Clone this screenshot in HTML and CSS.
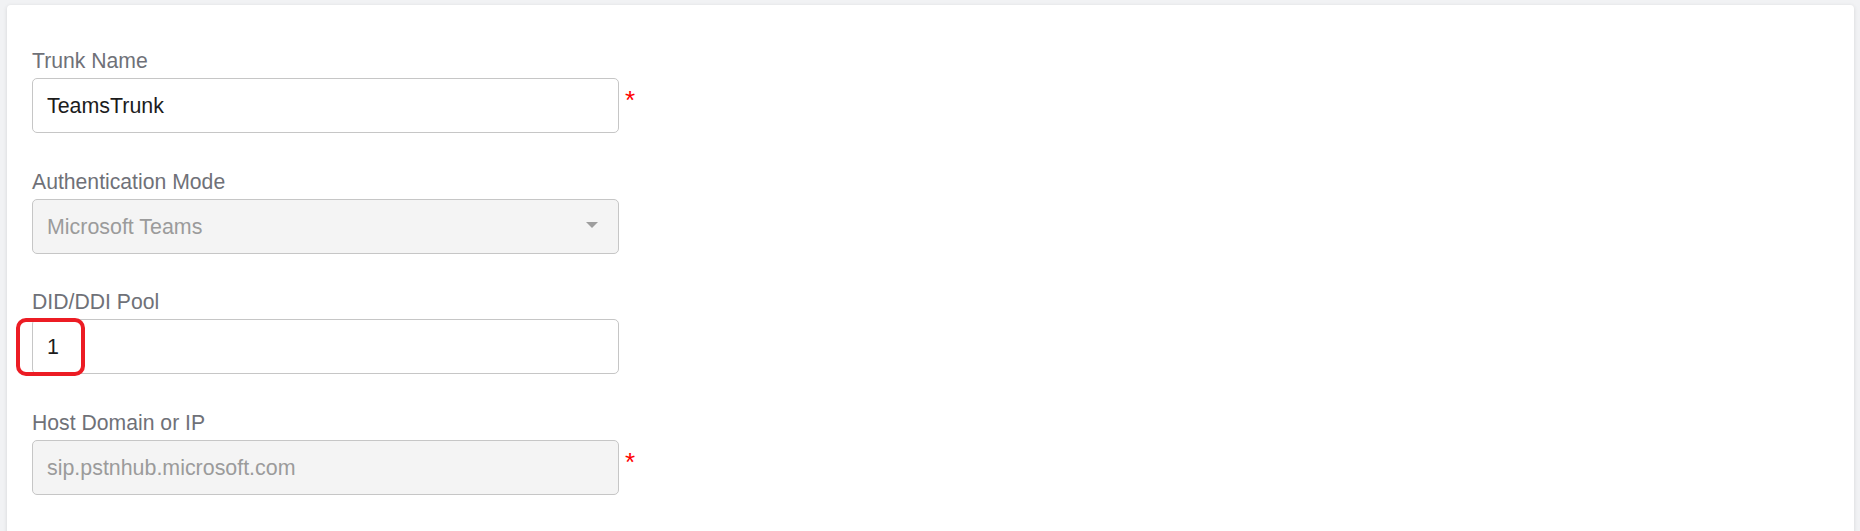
FILE: index.html
```html
<!DOCTYPE html>
<html lang="en">
<head>
<meta charset="utf-8">
<title>Trunk settings</title>
<link rel="stylesheet" href="styles.css">
</head>
<body>
  <main class="card">
    <div class="field">
      <label class="label">Trunk Name</label>
      <div class="row">
        <div class="control">TeamsTrunk</div>
        <span class="req">*</span>
      </div>
    </div>

    <div class="field">
      <label class="label">Authentication Mode</label>
      <div class="row">
        <div class="control disabled select">
          <span>Microsoft Teams</span>
          <svg class="caret" width="12" height="6" viewBox="0 0 12 6"><path d="M0 0 H12 L6 6 Z" fill="#9e9e9e"/></svg>
        </div>
      </div>
    </div>

    <div class="field">
      <label class="label">DID/DDI Pool</label>
      <div class="row">
        <div class="control annotated">1<span class="mark"></span></div>
      </div>
    </div>

    <div class="field">
      <label class="label">Host Domain or IP</label>
      <div class="row">
        <div class="control disabled">sip.pstnhub.microsoft.com</div>
        <span class="req">*</span>
      </div>
    </div>
  </main>
</body>
</html>
```

FILE: styles.css
```css
html, body {
  margin: 0;
  padding: 0;
}

body {
  background: #f1f2f4;
  font-family: "Liberation Sans", Arial, sans-serif;
  height: 531px;
  overflow: hidden;
  padding: 5px 6px 0 7px;
  box-sizing: border-box;
}

.card {
  background: #ffffff;
  border-radius: 4px;
  box-shadow: 0 1px 4px rgba(0, 0, 0, 0.12);
  min-height: 600px;
  padding: 45px 25px 0 25px;
  display: flex;
  flex-direction: column;
  gap: 37.67px;
}

.field {
  display: flex;
  flex-direction: column;
  gap: 6px;
}

.label {
  font-size: 21.2px;
  line-height: 22px;
  color: #6f7178;
}

.row {
  display: flex;
  align-items: flex-start;
  gap: 6px;
}

.control {
  position: relative;
  box-sizing: border-box;
  width: 587px;
  height: 55px;
  border: 1px solid #c6c6c6;
  border-radius: 5px;
  background: #ffffff;
  padding: 2px 14px 0 14px;
  display: flex;
  align-items: center;
  font-size: 21.4px;
  color: #1c1c1c;
}

.control.disabled {
  background: #f4f4f4;
  color: #9b9b9b;
}

.select {
  justify-content: space-between;
  padding-right: 20px;
}

.caret {
  display: block;
  margin-top: -5px;
}

.req {
  color: #ff0000;
  font-size: 26px;
  line-height: 26px;
  margin-top: 9px;
}

.mark {
  position: absolute;
  left: -17px;
  top: -2px;
  width: 69px;
  height: 58px;
  box-sizing: border-box;
  border: 4px solid #ec1c24;
  border-radius: 10px;
}
```
